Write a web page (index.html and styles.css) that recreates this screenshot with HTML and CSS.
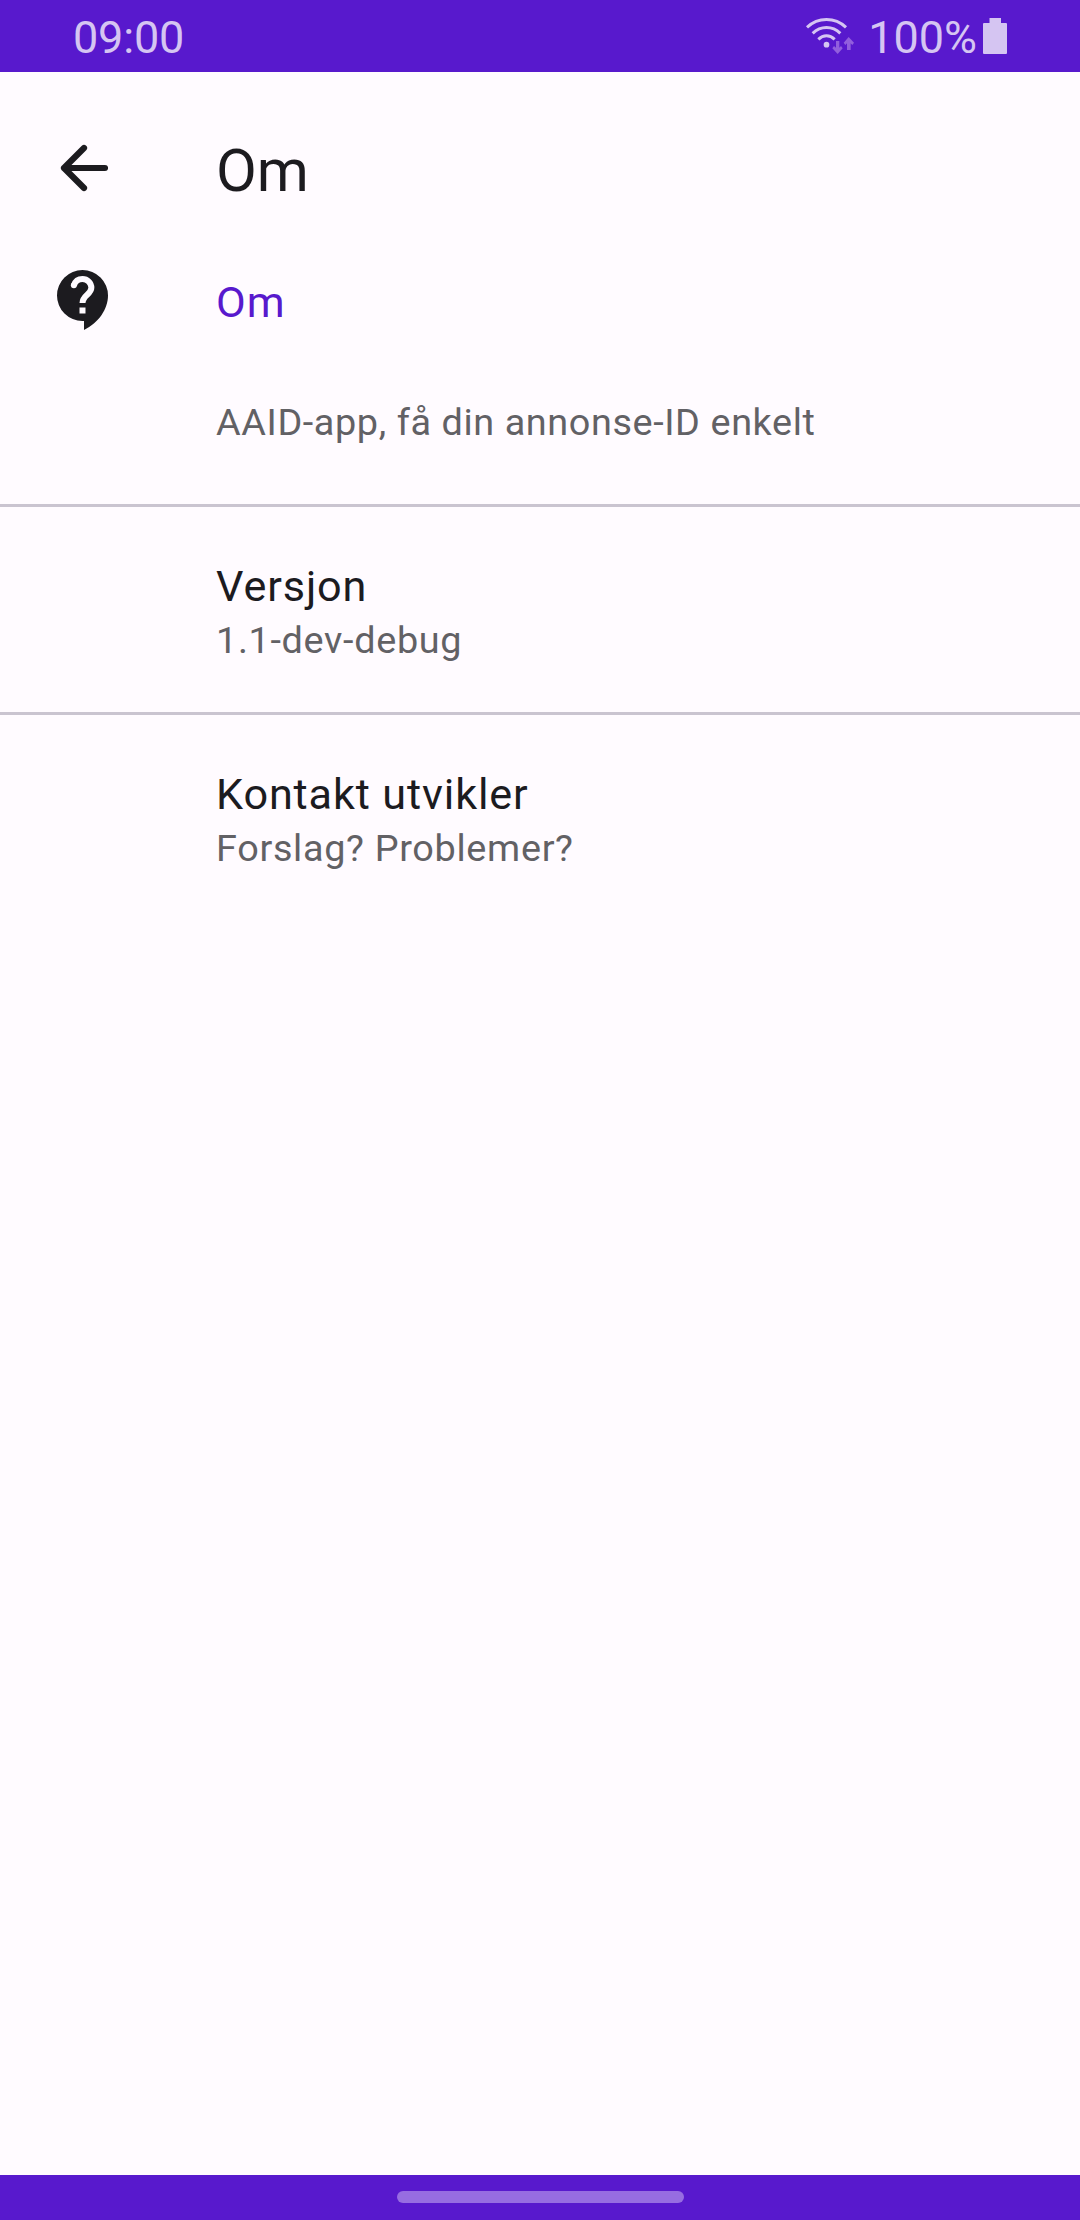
FILE: index.html
```html
<!DOCTYPE html>
<html lang="nb">
<head>
<meta charset="utf-8">
<title>Om</title>
<link rel="stylesheet" href="styles.css">
</head>
<body>
<div class="screen">
  <header class="status-bar">
    <span class="clock">09:00</span>
    <div class="status-icons">
      <svg class="wifi" viewBox="75 48 150 120">
        <g fill="none" stroke="currentColor" stroke-width="9">
          <path d="M81 82Q106 58.500 139.500 58.500T198 82"/>
          <path d="M98 100Q116 82.500 139.500 82.500T181 100"/>
          <path d="M115 118Q126 107.500 139.500 107.500T164 118"/>
        </g>
        <circle cx="139.500" cy="134" r="8.500" fill="currentColor"/>
        <path class="traffic" d="M168 123h10v20l5-5 5 7-15 17-16-17 5-7 6 5zM201 150v-20l-5 5-5-7 15-17 16 17-5 7-5-5v20z"/>
      </svg>
      <span class="percent">100%</span>
      <svg class="battery" viewBox="0 0 24 36"><path fill="currentColor" d="M6.500 0h11.500v5h5q1 0 1 1v29q0 1-1 1H1q-1 0-1-1V6q0-1 1-1h5.500z"/></svg>
    </div>
  </header>

  <div class="toolbar">
    <svg class="back" viewBox="0 0 72 72"><path d="M69 36H28M48 16L28 36l20 20" /></svg>
    <h1 class="title">Om</h1>
  </div>

  <main>
    <section class="category">
      <svg class="help" viewBox="0 0 24 24">
        <path fill="#1c1b1f" d="M11.500 2a8.500 8.500 0 0 0 0 17h.5v3c4.860-2.340 8-7 8-11.500A8.500 8.500 0 0 0 11.500 2z"/>
        <path fill="none" stroke="#fffbff" stroke-width="2" d="M8.650 7.100C9.050 5.850 10.150 5 11.500 5c1.650 0 2.950 1.300 2.950 2.950C14.450 10.150 11.500 10.400 11.500 13"/>
        <circle cx="8.620" cy="7.100" r="1" fill="#fffbff"/>
        <path fill="#fffbff" d="M10.500 14.500h2v2h-2z"/>
      </svg>
      <h2 class="category-title">Om</h2>
    </section>
    <section class="row row-intro"><p class="summary">AAID-app, få din annonse-ID enkelt</p></section>
    <section class="row"><h3 class="label">Versjon</h3><p class="summary">1.1-dev-debug</p></section>
    <section class="row"><h3 class="label">Kontakt utvikler</h3><p class="summary">Forslag? Problemer?</p></section>
  </main>

  <footer class="nav-bar"><div class="handle"></div></footer>
</div>
</body>
</html>
```
FILE: styles.css
```css
* { box-sizing: border-box; }
body, h1, h2, h3, p { margin: 0; font-weight: 400; }
body { font-family: Roboto, sans-serif; background: #fffbff; color: #1c1b1f; }
svg { display: block; flex: none; }
.screen { width: 1080px; height: 2220px; display: flex; flex-direction: column; }

.status-bar {
  height: 72px;
  padding: 0 73px;
  display: flex;
  justify-content: space-between;
  background: #5819cd;
  color: #d5c5f2;
  font-size: 45px;
  line-height: 75px;
}
.clock { letter-spacing: -0.200px; }
.status-icons { display: flex; }
.wifi { width: 50px; height: 40px; margin: 16px 13px 0 0; }
.traffic { fill: #925fdd; }
.percent { margin-right: 6px; }
.battery { width: 24px; height: 36px; margin-top: 18px; }

.toolbar { height: 192px; display: flex; padding-top: 60px; }
.back { width: 72px; height: 72px; margin-left: 36px; }
.back path { fill: none; stroke: #1c1b1f; stroke-width: 6.200; stroke-linecap: round; stroke-linejoin: round; }
.title { margin-left: 108px; font-size: 59.400px; line-height: 79px; }

.category { height: 120px; display: flex; padding-left: 48px; }
.help { width: 72px; height: 72px; }
.category-title { margin-left: 96px; padding-top: 14px; color: #5819cd; font-size: 43.200px; line-height: 50px; letter-spacing: 1px; }

.row { height: 208px; padding: 52px 0 0 216px; border-bottom: 3px solid #cac4d0; }
.row:last-child { border-bottom: 0; }
.row-intro { height: 123px; padding-top: 13px; }
.label { font-size: 43.200px; line-height: 56px; letter-spacing: 0.870px; }
.summary { color: #626165; font-size: 37.800px; line-height: 50px; letter-spacing: 0.680px; }
.row-intro .summary { letter-spacing: 0.600px; }

.nav-bar { height: 45px; margin-top: auto; padding-top: 16px; background: #5819cd; }
.handle { width: 287px; height: 12px; margin: 0 auto; border-radius: 6px; background: #976de1; }
```
